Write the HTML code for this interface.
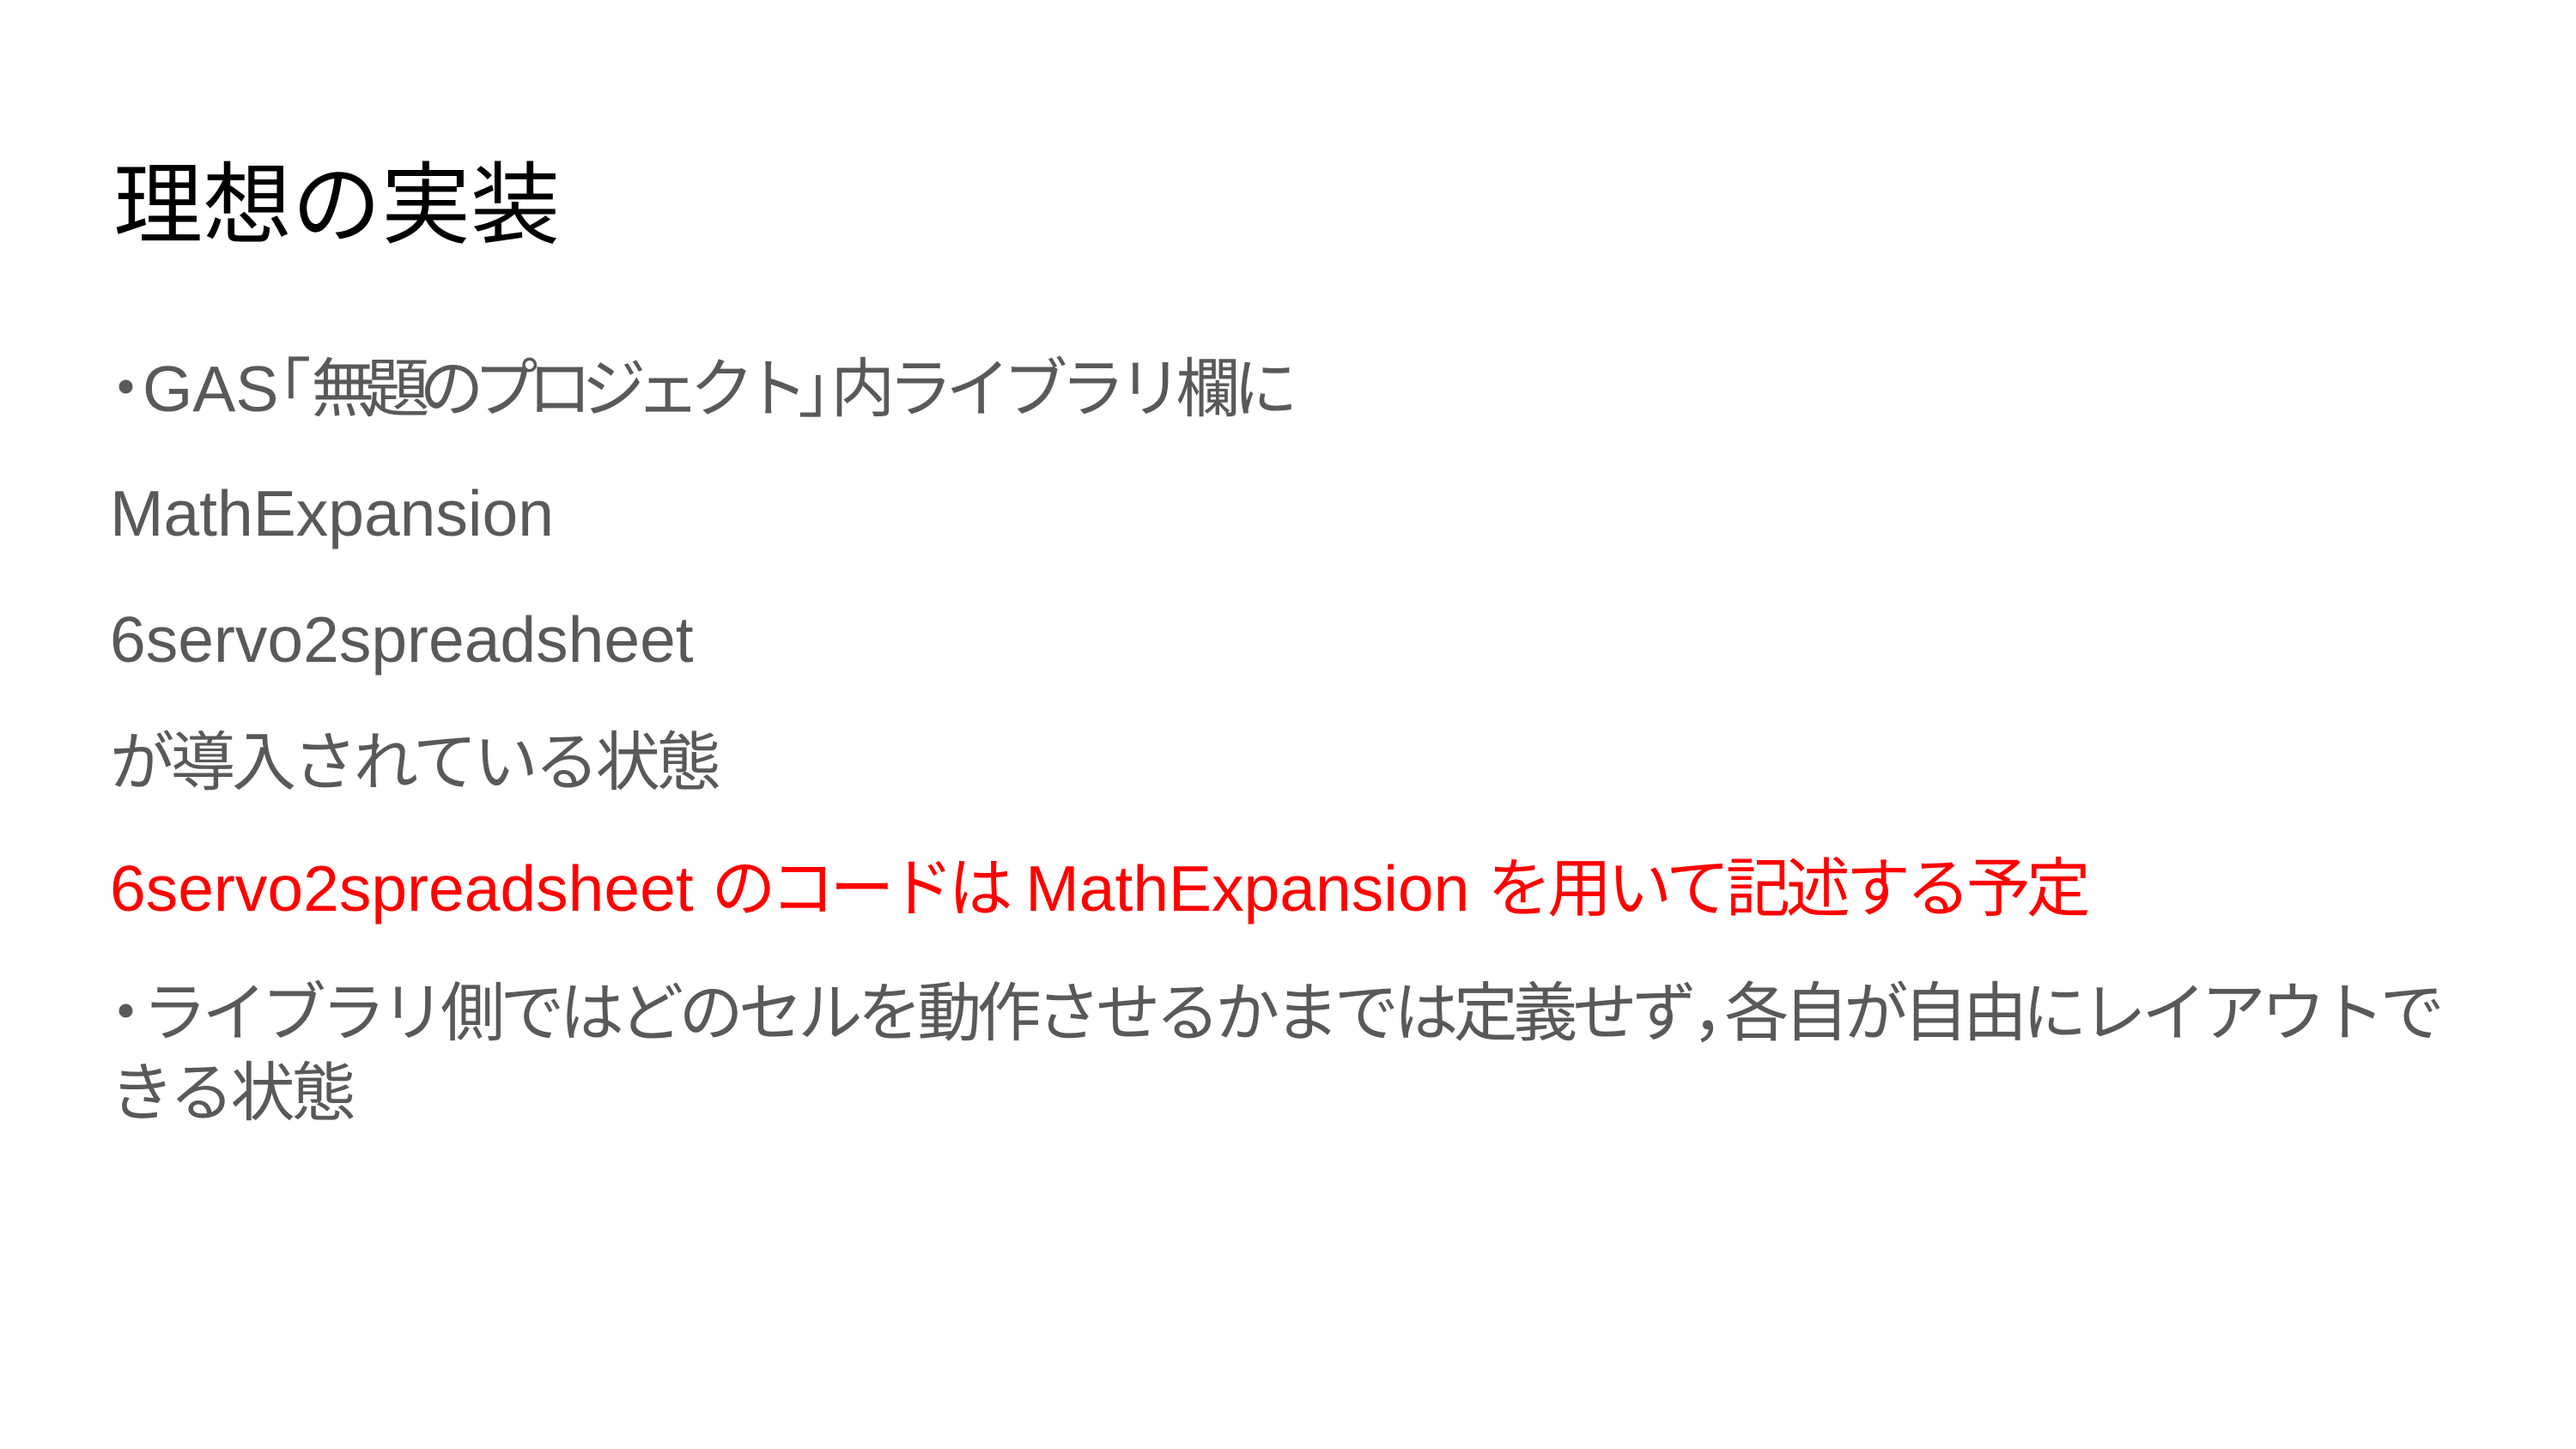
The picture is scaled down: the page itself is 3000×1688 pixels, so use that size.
<!DOCTYPE html>
<html><head><meta charset="utf-8"><style>
html,body{margin:0;padding:0;background:#fff;width:3000px;height:1688px;overflow:hidden}
.l{position:absolute;left:128px;white-space:nowrap;line-height:100px;height:100px;font-family:"Liberation Sans","Noto Sans CJK JP",sans-serif;font-size:75px;color:#595959}
.t{font-size:104px;color:#000;line-height:140px;height:140px;left:132px}
.r{color:#ff0000}
.n{display:inline-block;width:38px;height:100px;overflow:visible;vertical-align:top}
.n i{font-style:normal;display:inline-block}
</style></head><body>
<div class="l t" style="top:170px">理想の実装</div>
<div class="l" style="top:403px"><span class="n"><i style="margin-left:-19px">・</i></span>GAS<span class="n"><i style="margin-left:-37px">「</i></span><span style="letter-spacing:-12px">無題のプロジェクト</span><span class="n"><i>」</i></span><span style="letter-spacing:-8px">内ライブラリ欄に</span></div>
<div class="l" style="top:548px">MathExpansion</div>
<div class="l" style="top:695px">6servo2spreadsheet</div>
<div class="l" style="top:838px"><span style="letter-spacing:-4px">が導入されている状態</span></div>
<div class="l r" style="top:985px">6servo2spreadsheet <span style="letter-spacing:-6px">のコードは</span> MathExpansion <span style="letter-spacing:-5px">を用いて記述する予定</span></div>
<div class="l" style="top:1130px"><span class="n"><i style="margin-left:-19px">・</i></span><span style="letter-spacing:-5.6px">ライブラリ側ではどのセルを動作させるかまでは定義せず</span><span class="n"><i>，</i></span><span style="letter-spacing:-5.6px">各自が自由にレイアウトで</span></div>
<div class="l" style="top:1223px"><span style="letter-spacing:-4px">きる状態</span></div>
</body></html>
